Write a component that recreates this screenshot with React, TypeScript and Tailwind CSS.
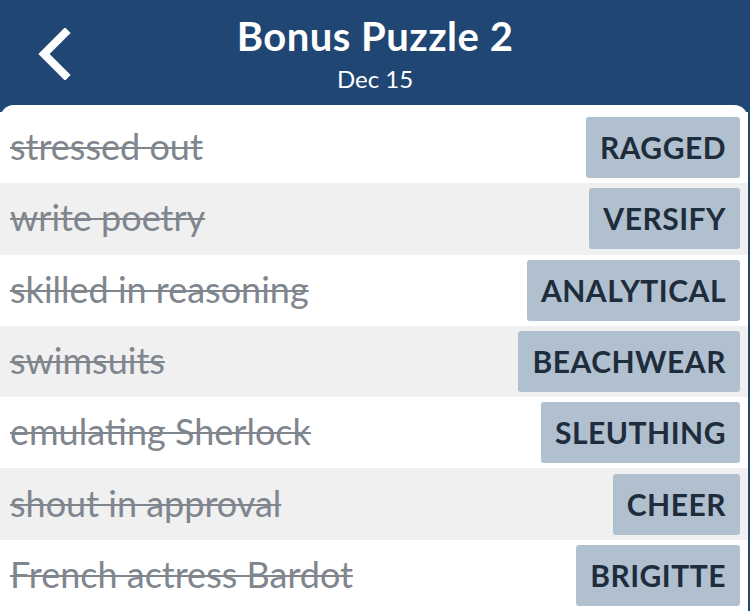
import React from "react";

const rows = [
  ["stressed out", "RAGGED"],
  ["write poetry", "VERSIFY"],
  ["skilled in reasoning", "ANALYTICAL"],
  ["swimsuits", "BEACHWEAR"],
  ["emulating Sherlock", "SLEUTHING"],
  ["shout in approval", "CHEER"],
  ["French actress Bardot", "BRIGITTE"],
];

export default function App() {
  return (
    <div className="w-[750px] h-[611px] overflow-hidden bg-[#204673]" style={{ fontFamily: "Lato, 'Open Sans', sans-serif" }}>
      <div className="relative h-[105px] flex flex-col items-center text-white">
        <svg className="absolute left-[34px] top-[28px]" width="40" height="52" viewBox="0 0 40 52">
          <path d="M31 5 L10 26 L31 47" fill="none" stroke="white" strokeWidth="8" strokeLinecap="square" strokeLinejoin="miter" />
        </svg>
        <div className="mt-[12px] text-[40px] leading-[48px] font-bold tracking-[0.5px]">Bonus Puzzle 2</div>
        <div className="mt-[5px] text-[24px] leading-[28px]">Dec 15</div>
      </div>
      <div className="bg-white rounded-t-[14px] w-[748px] h-[520px] pt-[7px]">
        {rows.map(([clue, ans], i) => (
          <div
            key={i}
            className={`h-[71.3px] flex items-center justify-between pl-[10px] pr-[8px] ${i % 2 === 1 ? "bg-[#f0f0f0]" : "bg-white"}`}
          >
            <span className="text-[36px] leading-[40px] pb-[3px] text-[#7f868e] line-through decoration-[2px]">{clue}</span>
            <span className="h-[61px] flex items-center px-[14px] rounded-[3px] bg-[#b0c0cf] text-[30px] font-bold text-[#1e2c3c] tracking-[0.5px]">
              {ans}
            </span>
          </div>
        ))}
      </div>
    </div>
  );
}
